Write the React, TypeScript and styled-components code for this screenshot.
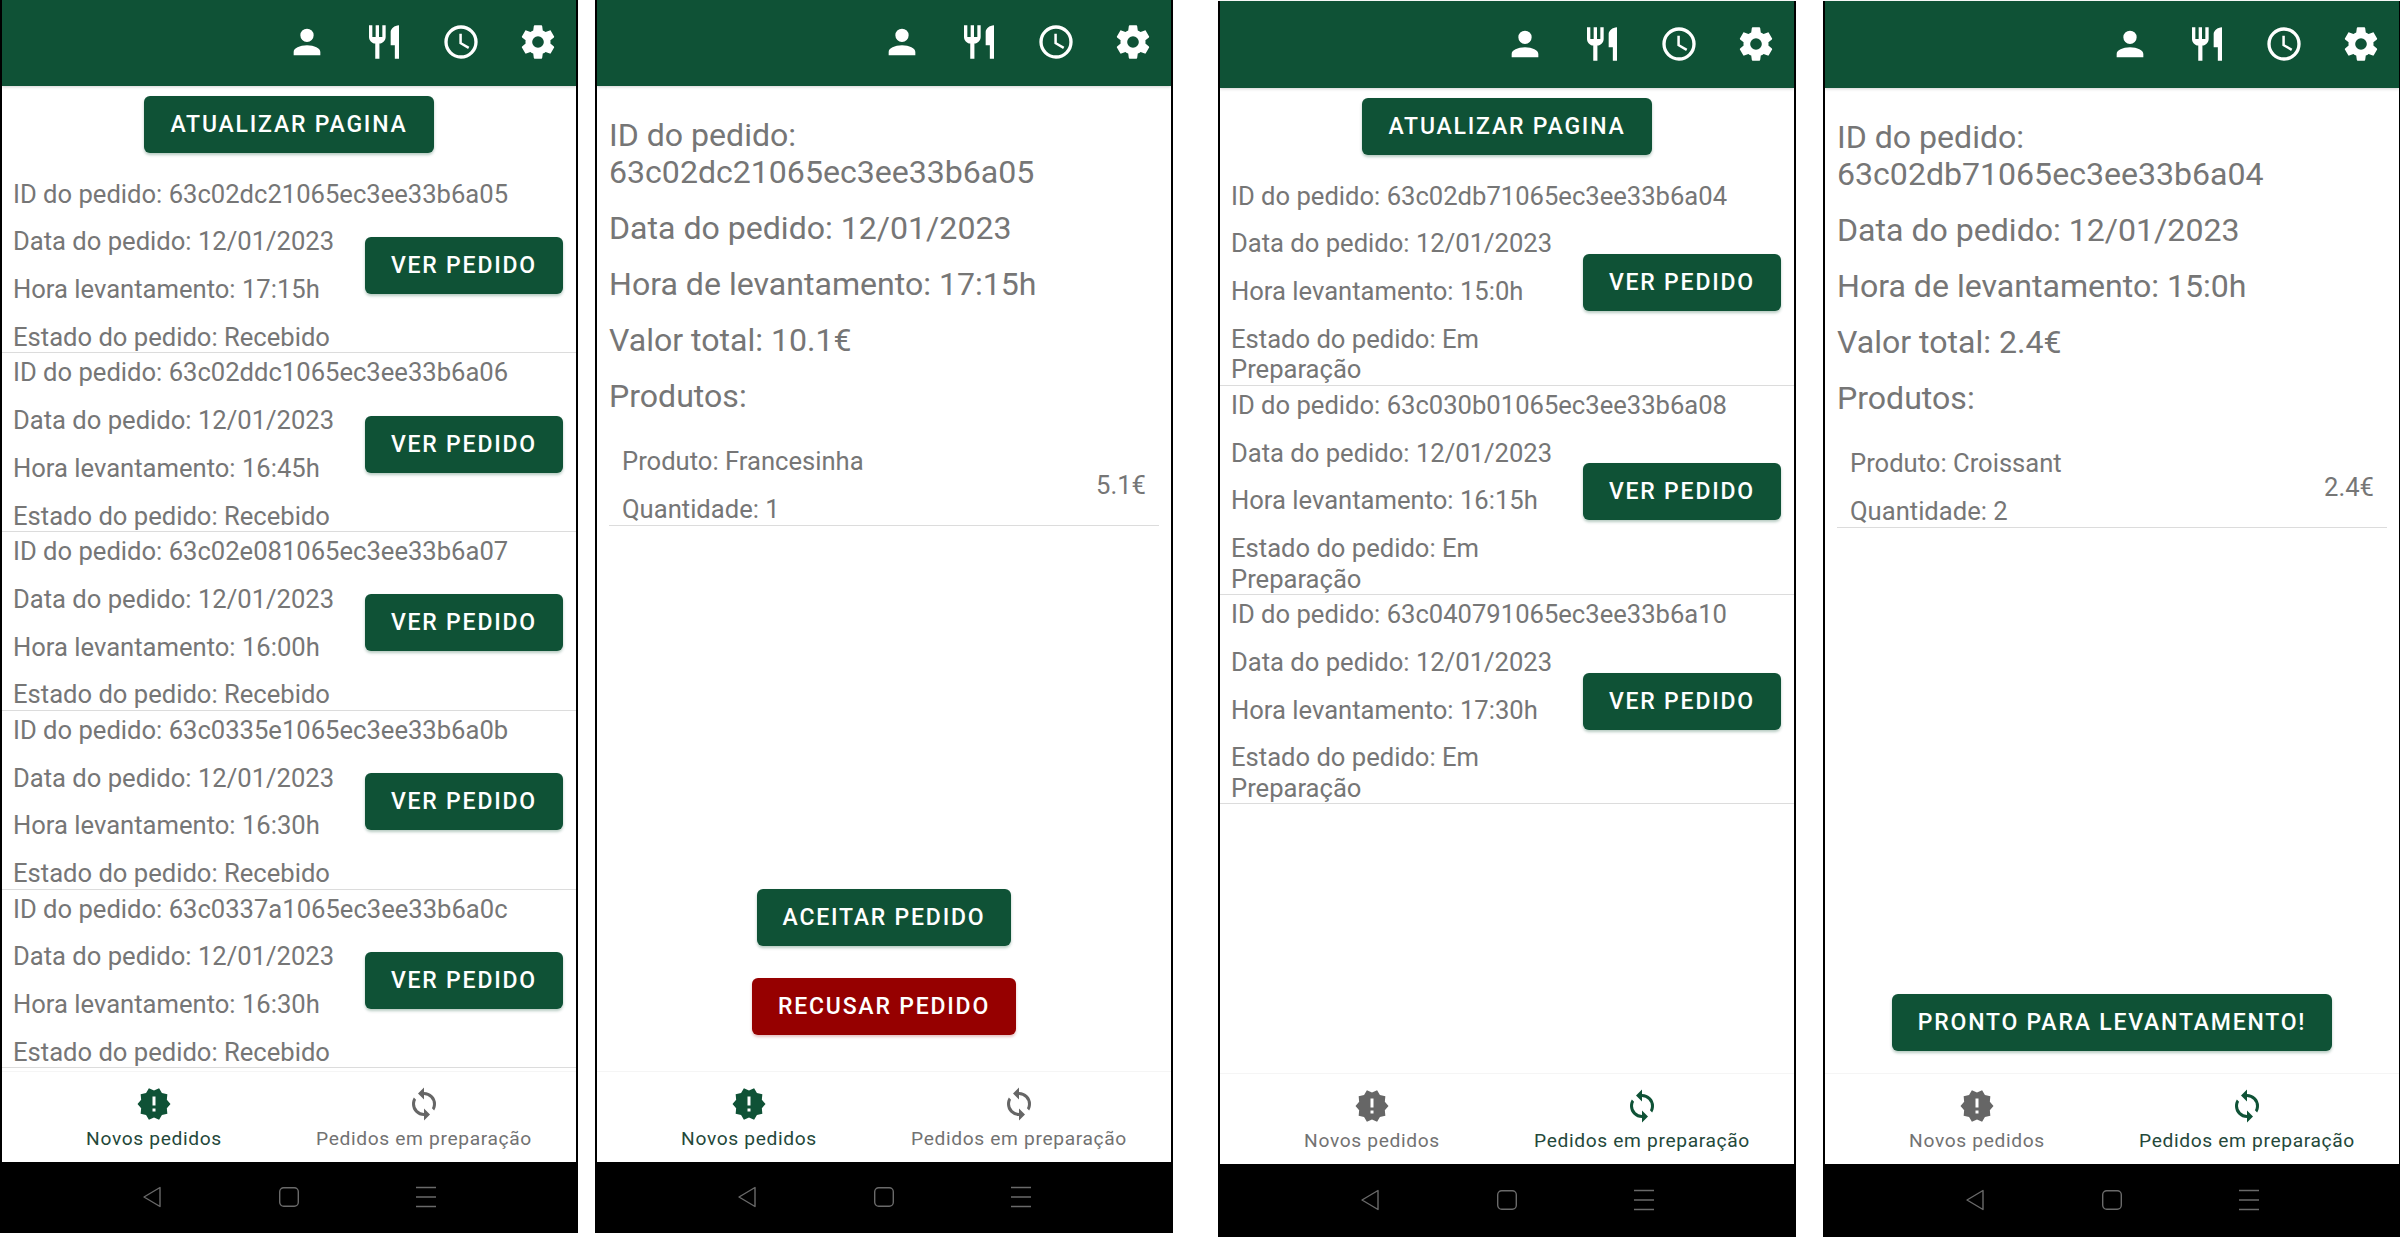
import React, { FunctionComponent } from 'react';
import styled, { createGlobalStyle } from 'styled-components';

const GREEN = '#0f5236';
const RED = '#960000';
const TEXT = '#767676';

const ICONS = {
  account: 'M12,4A4,4 0 0,1 16,8A4,4 0 0,1 12,12A4,4 0 0,1 8,8A4,4 0 0,1 12,4M12,14C16.42,14 20,15.79 20,18V20H4V18C4,15.79 7.58,14 12,14Z',
  food: 'M11,9H9V2H7V9H5V2H3V9C3,11.12 4.66,12.84 6.75,12.97V22H9.25V12.97C11.34,12.84 13,11.12 13,9V2H11V9M16,6V14H18.5V22H21V2C18.24,2 16,4.24 16,6Z',
  clock: 'M12,20A8,8 0 0,0 20,12A8,8 0 0,0 12,4A8,8 0 0,0 4,12A8,8 0 0,0 12,20M12,2A10,10 0 0,1 22,12A10,10 0 0,1 12,22C6.47,22 2,17.5 2,12A10,10 0 0,1 12,2M12.5,7V12.25L17,14.92L16.25,16.15L11,13V7H12.5Z',
  cog: 'M12,15.5A3.5,3.5 0 0,1 8.5,12A3.5,3.5 0 0,1 12,8.5A3.5,3.5 0 0,1 15.5,12A3.5,3.5 0 0,1 12,15.5M19.43,12.97C19.47,12.65 19.5,12.33 19.5,12C19.5,11.67 19.47,11.34 19.43,11L21.54,9.37C21.73,9.22 21.78,8.95 21.66,8.73L19.66,5.27C19.54,5.05 19.27,4.96 19.05,5.05L16.56,6.05C16.04,5.66 15.5,5.32 14.87,5.07L14.5,2.42C14.46,2.18 14.25,2 14,2H10C9.75,2 9.54,2.18 9.5,2.42L9.13,5.07C8.5,5.32 7.96,5.66 7.44,6.05L4.95,5.05C4.73,4.96 4.46,5.05 4.34,5.27L2.34,8.73C2.21,8.95 2.27,9.22 2.46,9.37L4.57,11C4.53,11.34 4.5,11.67 4.5,12C4.5,12.33 4.53,12.65 4.57,12.97L2.46,14.63C2.27,14.78 2.21,15.05 2.34,15.27L4.34,18.73C4.46,18.95 4.73,19.03 4.95,18.95L7.44,17.94C7.96,18.34 8.5,18.68 9.13,18.93L9.5,21.58C9.54,21.82 9.75,22 10,22H14C14.25,22 14.46,21.82 14.5,21.58L14.87,18.93C15.5,18.67 16.04,18.34 16.56,17.94L19.05,18.95C19.27,19.03 19.54,18.95 19.66,18.73L21.66,15.27C21.78,15.05 21.73,14.78 21.54,14.63L19.43,12.97Z',
  alert: 'M23,12L20.56,9.22L20.9,5.54L17.29,4.72L15.4,1.54L12,3L8.6,1.54L6.71,4.72L3.1,5.53L3.44,9.21L1,12L3.44,14.78L3.1,18.47L6.71,19.29L8.6,22.46L12,21L15.4,22.47L17.29,19.29L20.9,18.47L20.56,14.79L23,12M13,17H11V15H13V17M13,13H11V7H13V13Z',
  sync: 'M12,18A6,6 0 0,1 6,12C6,11 6.25,10.03 6.7,9.2L5.24,7.74C4.46,8.97 4,10.43 4,12A8,8 0 0,0 12,20V23L16,19L12,15M12,4V1L8,5L12,9V6A6,6 0 0,1 18,12C18,13 17.75,13.97 17.3,14.8L18.76,16.26C19.54,15.03 20,13.57 20,12A8,8 0 0,0 12,4Z',
};

const GlobalStyle = createGlobalStyle`
  html, body {
    margin: 0;
    padding: 0;
    background: #fff;
  }
  p {
    margin: 0;
  }
`;

const Board = styled.div`
  display: flex;
  width: 2400px;
  height: 1237px;
  overflow: hidden;
  background: #fff;
  font-family: Roboto, 'Liberation Sans', sans-serif;
`;

const Phone = styled.div<{ $left: number; $top: number; $bottom: number }>`
  display: flex;
  flex-direction: column;
  flex: 0 0 578px;
  box-sizing: border-box;
  margin: ${(p) => p.$top}px 0 ${(p) => p.$bottom}px ${(p) => p.$left}px;
  border-left: 2px solid #000;
  border-right: 2px solid #000;
  background: #fff;
`;

const Header = styled.div<{ $height: number }>`
  display: flex;
  flex: 0 0 ${(p) => p.$height}px;
  align-items: center;
  justify-content: flex-end;
  gap: 37px;
  box-sizing: border-box;
  padding: 0 18px 2px 0;
  background: ${GREEN};
  box-shadow: 0 1px 3px rgba(0, 0, 0, 0.18);
`;

const Main = styled.div`
  display: flex;
  flex: 1;
  flex-direction: column;
  min-height: 0;
  overflow: hidden;
`;

const TopAction = styled.div`
  display: flex;
  justify-content: center;
  padding: 10px 0 21.5px;
`;

const Button = styled.div<{ $danger?: boolean }>`
  display: flex;
  flex: 0 0 auto;
  align-items: center;
  justify-content: center;
  height: 57px;
  padding: 0 26px;
  border-radius: 6px;
  background: ${(p) => (p.$danger ? RED : GREEN)};
  box-shadow: 0 2px 3px ${(p) => (p.$danger ? 'rgba(150,0,0,.25)' : 'rgba(15,82,54,.3)')};
  color: #fff;
  font-size: 23px;
  font-weight: 500;
  letter-spacing: 1.8px;
  white-space: nowrap;
`;

const OrderRow = styled.div`
  display: flex;
  flex: 0 0 auto;
  align-items: center;
  justify-content: space-between;
  padding: 4px 13px 0 11px;
  border-bottom: 1px solid #dcdcdc;
`;

const OrderText = styled.div`
  display: flex;
  flex-direction: column;
  gap: 17.25px;
  width: 345px;
`;

const Line = styled.p<{ $nowrap?: boolean }>`
  color: ${TEXT};
  font-size: 25.6px;
  line-height: 30.5px;
  white-space: ${(p) => (p.$nowrap ? 'nowrap' : 'normal')};
`;

const Details = styled.div`
  display: flex;
  flex-direction: column;
  gap: 19px;
  padding: 31px 12px 0;
`;

const DetailLine = styled.p`
  color: ${TEXT};
  font-size: 32.1px;
  line-height: 37px;
`;

const ProductRow = styled.div`
  display: flex;
  align-items: center;
  justify-content: space-between;
  margin-top: 12px;
  padding: 0 13px;
  border-bottom: 1px solid #dcdcdc;
`;

const ProductText = styled.div`
  display: flex;
  flex-direction: column;
  gap: 17.5px;
`;

const Spacer = styled.div`
  flex: 1;
`;

const Actions = styled.div<{ $pad: number }>`
  display: flex;
  flex-direction: column;
  align-items: center;
  gap: 32px;
  padding-bottom: ${(p) => p.$pad}px;
`;

const BottomNav = styled.div`
  display: flex;
  flex: 0 0 91px;
  justify-content: center;
  box-sizing: border-box;
  padding-top: 14px;
  border-top: 1px solid #f5f5f5;
`;

const Tab = styled.div`
  display: flex;
  flex-direction: column;
  align-items: center;
  width: 270px;
`;

const TabLabel = styled.span<{ $active?: boolean }>`
  margin-top: 2px;
  color: ${(p) => (p.$active ? '#24483a' : '#727272')};
  font-size: 19.2px;
  line-height: 30px;
  letter-spacing: 0.65px;
  white-space: nowrap;
`;

const SystemBar = styled.div<{ $height: number }>`
  display: flex;
  flex: 0 0 ${(p) => p.$height}px;
  align-items: center;
  justify-content: center;
  gap: 115px;
  box-sizing: border-box;
  padding-bottom: 2px;
  background: #000;
`;

const Icon: FunctionComponent<{ d: string; size: number; color: string }> = ({ d, size, color }) => (
  <svg width={size} height={size} viewBox="0 0 24 24" fill={color}>
    <path d={d} />
  </svg>
);

const SystemIcons = () => (
  <>
    <svg width="22" height="22" viewBox="0 0 22 22" fill="none" stroke="#6a6a6a" strokeWidth="1.4">
      <path d="M19 1.5 V20.5 L3 11 Z" strokeLinejoin="round" />
    </svg>
    <svg width="22" height="22" viewBox="0 0 22 22" fill="none" stroke="#6a6a6a" strokeWidth="1.4">
      <rect x="1.7" y="1.7" width="18.6" height="18.6" rx="4" />
    </svg>
    <svg width="22" height="22" viewBox="0 0 22 22" fill="none" stroke="#6a6a6a" strokeWidth="1.4">
      <path d="M1 1.5 H21 M1 11 H21 M1 20.5 H21" />
    </svg>
  </>
);

const PhoneFrame: FunctionComponent<{
  left: number;
  top?: number;
  bottom?: number;
  headerHeight?: number;
  systemHeight?: number;
  activeTab: number;
  children: React.ReactNode;
}> = ({ left, top = 0, bottom = 4, headerHeight = 86, systemHeight = 71, activeTab, children }) => (
  <Phone $left={left} $top={top} $bottom={bottom}>
    <Header $height={headerHeight}>
      <Icon d={ICONS.account} size={40} color="#fff" />
      <Icon d={ICONS.food} size={40} color="#fff" />
      <Icon d={ICONS.clock} size={40} color="#fff" />
      <Icon d={ICONS.cog} size={40} color="#fff" />
    </Header>
    <Main>{children}</Main>
    <BottomNav>
      <Tab>
        <Icon d={ICONS.alert} size={36} color={activeTab === 0 ? GREEN : '#666'} />
        <TabLabel $active={activeTab === 0}>Novos pedidos</TabLabel>
      </Tab>
      <Tab>
        <Icon d={ICONS.sync} size={36} color={activeTab === 1 ? GREEN : '#666'} />
        <TabLabel $active={activeTab === 1}>Pedidos em preparação</TabLabel>
      </Tab>
    </BottomNav>
    <SystemBar $height={systemHeight}>
      <SystemIcons />
    </SystemBar>
  </Phone>
);

type Order = { id: string; time: string };

const OrderList: FunctionComponent<{ orders: Order[]; status: string }> = ({ orders, status }) => (
  <>
    <TopAction>
      <Button>ATUALIZAR PAGINA</Button>
    </TopAction>
    {orders.map((order) => (
      <OrderRow key={order.id}>
        <OrderText>
          <Line $nowrap>ID do pedido: {order.id}</Line>
          <Line>Data do pedido: 12/01/2023</Line>
          <Line>Hora levantamento: {order.time}</Line>
          <Line>Estado do pedido: {status}</Line>
        </OrderText>
        <Button>VER PEDIDO</Button>
      </OrderRow>
    ))}
  </>
);

const OrderDetails: FunctionComponent<{
  id: string;
  time: string;
  total: string;
  product: string;
  quantity: number;
  price: string;
}> = ({ id, time, total, product, quantity, price }) => (
  <Details>
    <DetailLine>ID do pedido: {id}</DetailLine>
    <DetailLine>Data do pedido: 12/01/2023</DetailLine>
    <DetailLine>Hora de levantamento: {time}</DetailLine>
    <DetailLine>Valor total: {total}</DetailLine>
    <DetailLine>Produtos:</DetailLine>
    <ProductRow>
      <ProductText>
        <Line>Produto: {product}</Line>
        <Line>Quantidade: {quantity}</Line>
      </ProductText>
      <Line>{price}</Line>
    </ProductRow>
  </Details>
);

const newOrders: Order[] = [
  { id: '63c02dc21065ec3ee33b6a05', time: '17:15h' },
  { id: '63c02ddc1065ec3ee33b6a06', time: '16:45h' },
  { id: '63c02e081065ec3ee33b6a07', time: '16:00h' },
  { id: '63c0335e1065ec3ee33b6a0b', time: '16:30h' },
  { id: '63c0337a1065ec3ee33b6a0c', time: '16:30h' },
];

const preparingOrders: Order[] = [
  { id: '63c02db71065ec3ee33b6a04', time: '15:0h' },
  { id: '63c030b01065ec3ee33b6a08', time: '16:15h' },
  { id: '63c040791065ec3ee33b6a10', time: '17:30h' },
];

const App = () => (
  <Board>
    <GlobalStyle />
    <PhoneFrame left={0} activeTab={0}>
      <OrderList orders={newOrders} status="Recebido" />
    </PhoneFrame>
    <PhoneFrame left={17} activeTab={0}>
      <OrderDetails
        id="63c02dc21065ec3ee33b6a05"
        time="17:15h"
        total="10.1€"
        product="Francesinha"
        quantity={1}
        price="5.1€"
      />
      <Spacer />
      <Actions $pad={36}>
        <Button>ACEITAR PEDIDO</Button>
        <Button $danger>RECUSAR PEDIDO</Button>
      </Actions>
    </PhoneFrame>
    <PhoneFrame left={45} top={1} bottom={0} headerHeight={87} systemHeight={73} activeTab={1}>
      <OrderList orders={preparingOrders} status="Em Preparação" />
    </PhoneFrame>
    <PhoneFrame left={27} top={1} bottom={0} headerHeight={87} systemHeight={73} activeTab={1}>
      <OrderDetails
        id="63c02db71065ec3ee33b6a04"
        time="15:0h"
        total="2.4€"
        product="Croissant"
        quantity={2}
        price="2.4€"
      />
      <Spacer />
      <Actions $pad={22}>
        <Button>PRONTO PARA LEVANTAMENTO!</Button>
      </Actions>
    </PhoneFrame>
  </Board>
);

export default App;
